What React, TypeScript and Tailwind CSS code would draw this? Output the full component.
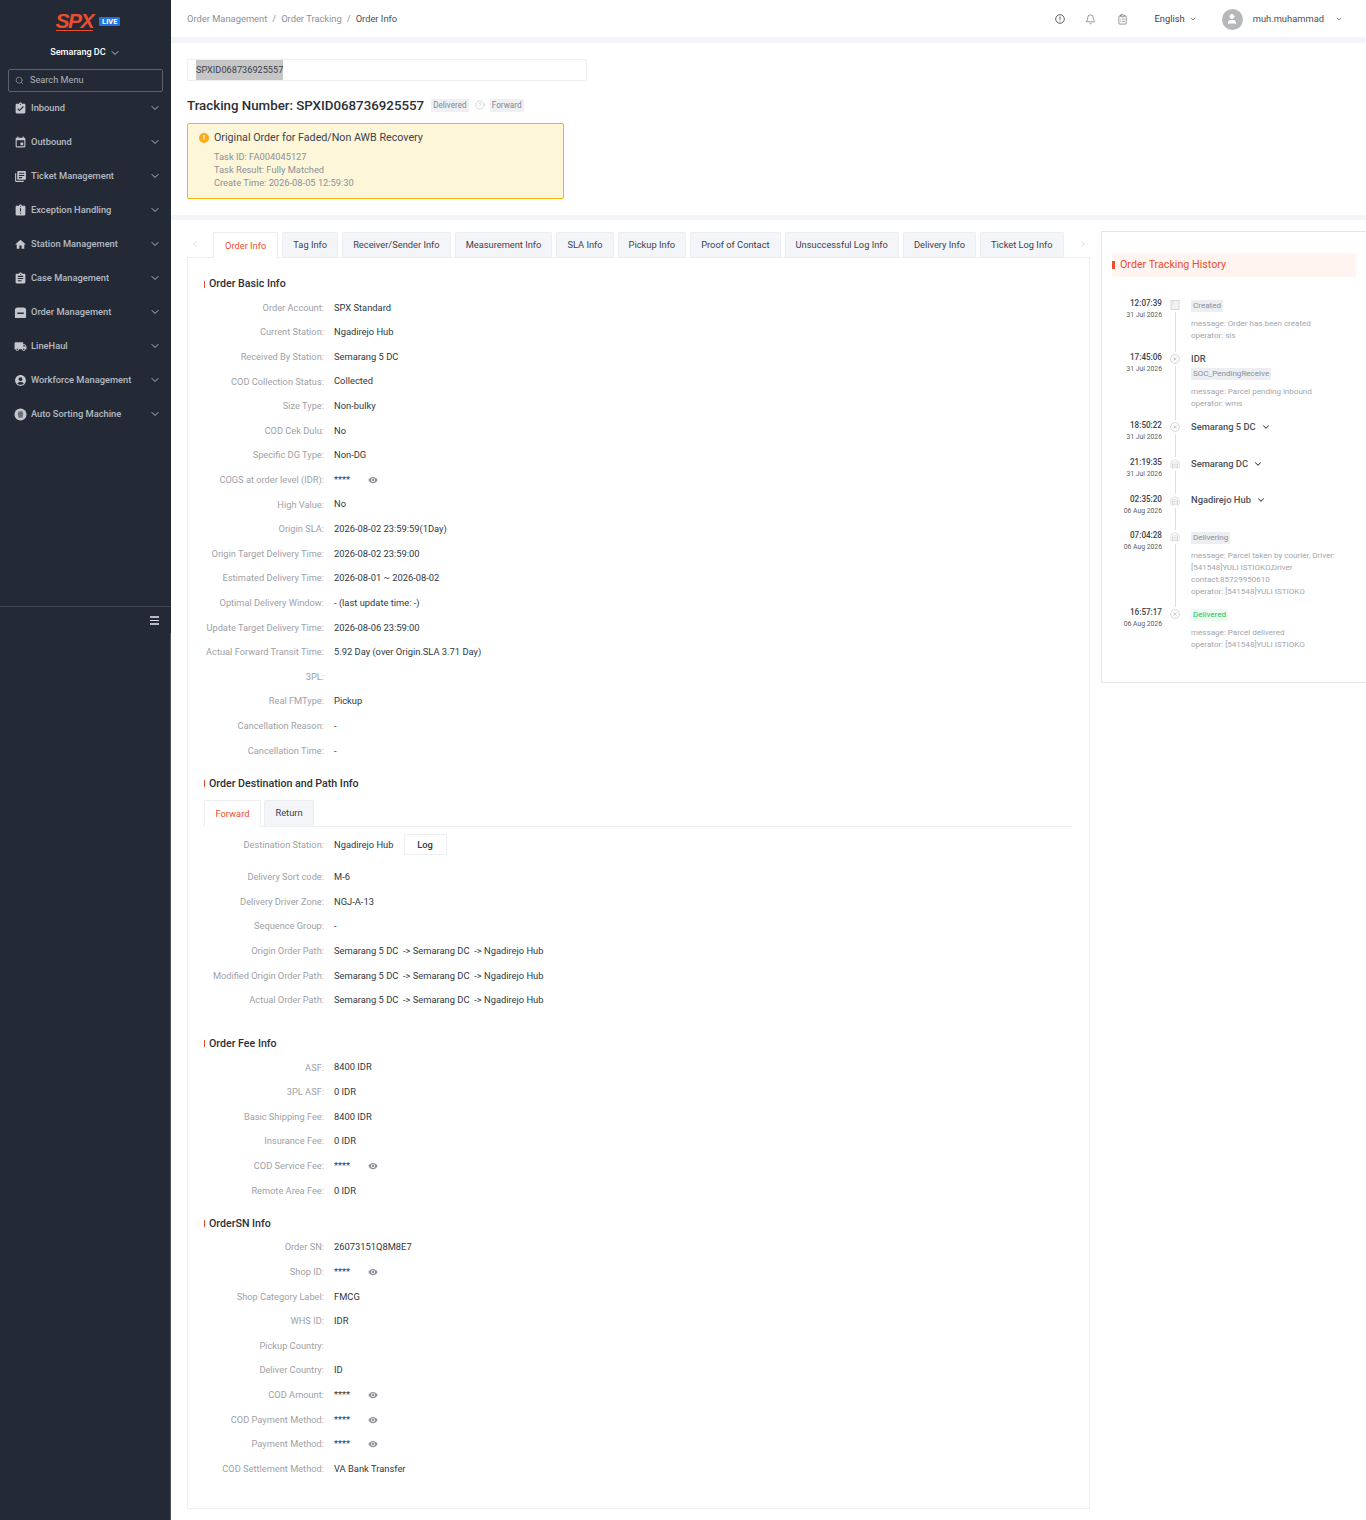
import { Bell, ChevronDown, ChevronLeft, ChevronRight, CircleHelp, ClipboardList, Search, User, Warehouse } from 'lucide-react'
import { ReactNode } from 'react'
import {
  MdAccountCircle,
  MdAssignment,
  MdAssignmentLate,
  MdAssignmentTurnedIn,
  MdEvent,
  MdHome,
  MdLibraryBooks,
  MdLocalShipping,
  MdVisibility,
} from 'react-icons/md'

const iconClass = 'w-[13px] h-[13px]'

const OrderIcon = () => (
  <svg viewBox="0 0 14 14" className={iconClass} fill="currentColor">
    <path d="M4 1.5h6A3 3 0 0 1 13 4.5V12a1 1 0 0 1-1 1H2a1 1 0 0 1-1-1V4.5a3 3 0 0 1 3-3z" />
    <rect x="3.5" y="7" width="7" height="1.6" fill="#232a35" />
  </svg>
)

const SortingIcon = () => (
  <svg viewBox="0 0 14 14" className={iconClass} fill="currentColor">
    <circle cx="7" cy="7" r="6.5" />
    <path d="M5 3.5h4l1 3-1 4H5l-1-4z" fill="#232a35" opacity="0.55" />
  </svg>
)

const menuItems: { label: string; icon: ReactNode }[] = [
  { label: 'Inbound', icon: <MdAssignmentTurnedIn className={iconClass} /> },
  { label: 'Outbound', icon: <MdEvent className={iconClass} /> },
  { label: 'Ticket Management', icon: <MdLibraryBooks className={iconClass} /> },
  { label: 'Exception Handling', icon: <MdAssignmentLate className={iconClass} /> },
  { label: 'Station Management', icon: <MdHome className={iconClass} /> },
  { label: 'Case Management', icon: <MdAssignment className={iconClass} /> },
  { label: 'Order Management', icon: <OrderIcon /> },
  { label: 'LineHaul', icon: <MdLocalShipping className={iconClass} /> },
  { label: 'Workforce Management', icon: <MdAccountCircle className={iconClass} /> },
  { label: 'Auto Sorting Machine', icon: <SortingIcon /> },
]

const tabs = [
  'Order Info',
  'Tag Info',
  'Receiver/Sender Info',
  'Measurement Info',
  'SLA Info',
  'Pickup Info',
  'Proof of Contact',
  'Unsuccessful Log Info',
  'Delivery Info',
  'Ticket Log Info',
]

type RowData = [string, string]

const MASK = '****'

const basicRows: RowData[] = [
  ['Order Account', 'SPX Standard'],
  ['Current Station', 'Ngadirejo Hub'],
  ['Received By Station', 'Semarang 5 DC'],
  ['COD Collection Status', 'Collected'],
  ['Size Type', 'Non-bulky'],
  ['COD Cek Dulu', 'No'],
  ['Specific DG Type', 'Non-DG'],
  ['COGS at order level (IDR)', MASK],
  ['High Value', 'No'],
  ['Origin SLA', '2026-08-02 23:59:59(1Day)'],
  ['Origin Target Delivery Time', '2026-08-02 23:59:00'],
  ['Estimated Delivery Time', '2026-08-01 ~ 2026-08-02'],
  ['Optimal Delivery Window', '- (last update time: -)'],
  ['Update Target Delivery Time', '2026-08-06 23:59:00'],
  ['Actual Forward Transit Time', '5.92 Day (over Origin.SLA 3.71 Day)'],
  ['3PL', ''],
  ['Real FMType', 'Pickup'],
  ['Cancellation Reason', '-'],
  ['Cancellation Time', '-'],
]

const PATH = 'Semarang 5 DC  -> Semarang DC  -> Ngadirejo Hub'

const pathRows: RowData[] = [
  ['Delivery Sort code', 'M-6'],
  ['Delivery Driver Zone', 'NGJ-A-13'],
  ['Sequence Group', '-'],
  ['Origin Order Path', PATH],
  ['Modified Origin Order Path', PATH],
  ['Actual Order Path', PATH],
]

const feeRows: RowData[] = [
  ['ASF', '8400 IDR'],
  ['3PL ASF', '0 IDR'],
  ['Basic Shipping Fee', '8400 IDR'],
  ['Insurance Fee', '0 IDR'],
  ['COD Service Fee', MASK],
  ['Remote Area Fee', '0 IDR'],
]

const snRows: RowData[] = [
  ['Order SN', '26073151Q8M8E7'],
  ['Shop ID', MASK],
  ['Shop Category Label', 'FMCG'],
  ['WHS ID', 'IDR'],
  ['Pickup Country', ''],
  ['Deliver Country', 'ID'],
  ['COD Amount', MASK],
  ['COD Payment Method', MASK],
  ['Payment Method', MASK],
  ['COD Settlement Method', 'VA Bank Transfer'],
]

function SectionTitle({ title, className }: { title: string; className?: string }) {
  return (
    <div className={`flex items-center h-6 ${className ?? ''}`}>
      <span className="w-px h-[7px] bg-[#ee4d2d] mr-1" />
      <span className="text-[10.65px] font-medium text-[#2b2f36]">{title}</span>
    </div>
  )
}

function Rows({ rows }: { rows: RowData[] }) {
  return (
    <div className="-mt-[0.7px]">
      {rows.map(([label, value]) => (
        <div key={label} className="flex items-center h-[24.62px] whitespace-nowrap">
          <span className="w-[120px] shrink-0 text-right text-[9.25px] text-[#9ea1a8]">{label}:</span>
          <span className="ml-[10px] text-[9.35px] text-[#303844] whitespace-pre">{value}</span>
          {value === MASK && <MdVisibility className="ml-[18px] w-[10px] h-[10px] text-[#8b9099]" />}
        </div>
      ))}
    </div>
  )
}

type HistoryItem = {
  time: string
  date: string
  icon: 'doc' | 'x' | 'house'
  height: string
  station?: string
  chevron?: boolean
  tag?: string
  tagGreen?: boolean
  lines?: string[]
}

const history: HistoryItem[] = [
  {
    time: '12:07:39',
    date: '31 Jul 2026',
    icon: 'doc',
    height: 'h-[54px]',
    tag: 'Created',
    lines: ['message: Order has been created', 'operator: sls'],
  },
  {
    time: '17:45:06',
    date: '31 Jul 2026',
    icon: 'x',
    height: 'h-[68px]',
    station: 'IDR',
    tag: 'SOC_PendingReceive',
    lines: ['message: Parcel pending inbound', 'operator: wms'],
  },
  { time: '18:50:22', date: '31 Jul 2026', icon: 'x', height: 'h-[37px]', station: 'Semarang 5 DC', chevron: true },
  { time: '21:19:35', date: '31 Jul 2026', icon: 'house', height: 'h-[36.5px]', station: 'Semarang DC', chevron: true },
  { time: '02:35:20', date: '06 Aug 2026', icon: 'house', height: 'h-[36.5px]', station: 'Ngadirejo Hub', chevron: true },
  {
    time: '07:04:28',
    date: '06 Aug 2026',
    icon: 'house',
    height: 'h-[77px]',
    tag: 'Delivering',
    lines: [
      'message: Parcel taken by courier, Driver:',
      '[541548]YULI ISTIOKO,Driver',
      'contact:85729950610',
      'operator: [541548]YULI ISTIOKO',
    ],
  },
  {
    time: '16:57:17',
    date: '06 Aug 2026',
    icon: 'x',
    height: 'h-[50px]',
    tag: 'Delivered',
    tagGreen: true,
    lines: ['message: Parcel delivered', 'operator: [541548]YULI ISTIOKO'],
  },
]

function TimelineIcon({ type }: { type: HistoryItem['icon'] }) {
  if (type === 'doc') {
    return (
      <svg viewBox="0 0 10 10" className="w-[10px] h-[10px] text-[#d5d7db]" fill="none" stroke="currentColor">
        <rect x="1" y="0.5" width="8" height="9" fill="#f1f2f4" />
        <path d="M3 1v4" stroke="#dfe1e5" />
      </svg>
    )
  }
  if (type === 'house') {
    return <Warehouse className="w-[10px] h-[10px] text-[#c9ccd1]" strokeWidth={1.5} />
  }
  return (
    <svg viewBox="0 0 10 10" className="w-[10px] h-[10px] text-[#c9ccd1]" fill="none" stroke="currentColor">
      <circle cx="5" cy="5" r="4.4" strokeWidth="0.8" />
      <path d="M3.4 3.4l3.2 3.2M6.6 3.4L3.4 6.6" strokeWidth="1" />
    </svg>
  )
}

function Sidebar() {
  return (
    <aside className="w-[171px] shrink-0 bg-[#232a35] flex flex-col min-h-[1520px]">
      <div className="flex items-center justify-center h-[41px] pl-[5px]">
        <div className="flex flex-col items-start">
          <span className="text-[#ee4d2d] text-[21px] leading-[19px] font-bold italic tracking-[-1.5px] font-['Liberation_Sans',sans-serif]">
            SPX
          </span>
          <span className="w-[37px] h-px bg-[#ee4d2d]" />
        </div>
        <span className="ml-[6px] mt-[1px] bg-[#2673dd] text-white text-[7.5px] font-bold leading-[9px] px-[3px] rounded-[1px]">
          LIVE
        </span>
      </div>
      <div className="flex items-center justify-center h-[20px] mt-[2px] text-white text-[9.1px] font-medium">
        Semarang DC
        <ChevronDown className="ml-[3px] w-[12px] h-[12px] text-[#c4c7cc]" />
      </div>
      <div className="mx-2 mt-[6px] h-[23px] border border-[#5b626c] rounded-[2px] flex items-center pl-[6px] text-[#aeb4bd] text-[9.2px]">
        <Search className="w-[9px] h-[9px] mr-[6px] text-[#8b9099]" />
        <span className="-translate-y-px">Search Menu</span>
      </div>
      <nav>
        {menuItems.map((item) => (
          <div key={item.label} className="flex items-center h-[34px] pl-[14px] pr-[10px] text-[#b5bbc4] text-[9.3px] font-medium">
            <span className="w-[17px] text-[#c3c7cd] -translate-y-px">{item.icon}</span>
            <span className="flex-1 -translate-y-px">{item.label}</span>
            <ChevronDown className="w-[12px] h-[12px] text-[#b5bbc4] -translate-y-px" />
          </div>
        ))}
      </nav>
      <div className="mt-[174px] h-[27px] border-t border-[#3f4650] flex items-center justify-end pr-3">
        <div className="flex flex-col gap-[2px] w-[9px]">
          <span className="h-[2px] bg-[#b5bbc4]" />
          <span className="h-px bg-[#d8dbe0]" />
          <span className="h-[2px] bg-[#b5bbc4]" />
        </div>
      </div>
      <div className="flex-1 border-r border-[#4b515b]" />
    </aside>
  )
}

function Header() {
  return (
    <header className="h-[37px] bg-white flex items-center pl-4 pr-[23px] pt-px text-[9.35px]">
      <span className="text-[#8b9099]">Order Management</span>
      <span className="mx-[5px] text-[#8b9099]">/</span>
      <span className="text-[#8b9099]">Order Tracking</span>
      <span className="mx-[5px] text-[#8b9099]">/</span>
      <span className="text-[#4a5058]">Order Info</span>
      <div className="ml-auto flex items-center text-[#4a5058]">
        <svg viewBox="0 0 10 10" className="w-[10px] h-[10px]" fill="none" stroke="currentColor" strokeWidth="0.9">
          <circle cx="5" cy="5" r="4.3" />
          <path d="M5 2.5v3.4M5 6.8v.8" />
        </svg>
        <Bell className="ml-[20px] w-[11px] h-[11px]" strokeWidth={1.25} />
        <ClipboardList className="ml-[21px] w-[11px] h-[11px]" strokeWidth={1.25} />
        <span className="ml-[26px] text-[#3c424b]">English</span>
        <ChevronDown className="ml-1 w-[8px] h-[8px]" />
        <span className="ml-[25px] w-[21px] h-[21px] rounded-full bg-[#b5b7ba] flex items-center justify-center">
          <User className="w-[12px] h-[12px] text-white" fill="white" />
        </span>
        <span className="ml-[10px] text-[#4a5058]">muh.muhammad</span>
        <ChevronDown className="ml-[11px] w-[8px] h-[8px]" />
      </div>
    </header>
  )
}

function TrackingSummary() {
  return (
    <section className="bg-white h-[172px] pl-4 pt-[16px]">
      <div className="w-[400px] h-[22px] border border-[#eceef2] rounded-[2px] pl-2 flex items-stretch text-[9.2px] text-[#3c424b]">
        <span className="bg-[#c6c6c6] flex items-center">SPXID068736925557</span>
      </div>
      <div className="flex items-center mt-[14px] h-[22px]">
        <span className="text-[13.3px] font-medium text-[#2b2f36]">Tracking Number: SPXID068736925557</span>
        <span className="ml-[7px] -translate-y-px bg-[#eef0f3] text-[#848992] text-[8.2px] h-[13px] leading-[13px] px-[2px]">Delivered</span>
        <CircleHelp className="ml-[6px] -translate-y-px w-[10px] h-[10px] text-[#b5b7ba]" strokeWidth={1.25} />
        <span className="ml-[5px] -translate-y-px bg-[#eef0f3] text-[#848992] text-[8.2px] h-[13px] leading-[13px] px-[2px]">Forward</span>
      </div>
      <div className="mt-[6px] w-[377px] h-[76px] bg-[#fef6d9] border border-[#fbb018] rounded-[2px] pl-[11px] pt-[7px] flex">
        <span className="mt-[2px] w-[10px] h-[10px] rounded-full bg-[#fba81c] text-white text-[8px] font-bold leading-[10px] text-center">!</span>
        <div className="ml-[5px]">
          <div className="text-[10.7px] leading-[14px] text-[#3c424b]">Original Order for Faded/Non AWB Recovery</div>
          <div className="mt-[5px] text-[9.3px] leading-[13px] text-[#8b9099]">
            <div>Task ID: FA004045127</div>
            <div>Task Result: Fully Matched</div>
            <div>Create Time: 2026-08-05 12:59:30</div>
          </div>
        </div>
      </div>
    </section>
  )
}

function DetailTabs() {
  return (
    <div className="flex items-end h-[26px]">
      <div className="w-[26px] shrink-0 h-full flex items-center">
        <ChevronLeft className="ml-[3px] w-[10px] h-[10px] text-[#d5d7db]" />
      </div>
      <div className="flex gap-[4px] whitespace-nowrap">
        {tabs.map((tab, i) => (
          <div
            key={tab}
            className={
              i === 0
                ? 'h-[26px] px-[11px] -mb-px z-10 flex items-center bg-white border border-b-0 border-[#eceef2] rounded-t-[2px] text-[9.3px] text-[#ee4d2d]'
                : 'h-[25px] px-[10px] flex items-center bg-[#f4f5f9] border border-b-0 border-[#eceef2] rounded-t-[2px] text-[9.3px] text-[#3c424b]'
            }
          >
            {tab}
          </div>
        ))}
      </div>
      <div className="ml-[14px] h-full flex items-center">
        <ChevronRight className="w-[10px] h-[10px] text-[#d5d7db]" />
      </div>
    </div>
  )
}

function InfoPanel() {
  return (
    <div className="h-[1252px] border border-[#eceef2] pt-[14px] pl-4 pr-[17px]">
      <SectionTitle title="Order Basic Info" />
      <Rows rows={basicRows} />
      <SectionTitle title="Order Destination and Path Info" className="mt-[9px]" />
      <div className="mt-[4px] flex gap-[3px] border-b border-[#eceef2] h-[27px]">
        <div className="w-[57px] h-[27px] bg-white border border-b-0 border-[#eceef2] rounded-t-[2px] flex items-center justify-center text-[9.35px] text-[#ee4d2d]">
          Forward
        </div>
        <div className="w-[50px] h-[26px] bg-[#f4f5f9] border border-b-0 border-[#eceef2] rounded-t-[2px] flex items-center justify-center text-[9.35px] text-[#3c424b]">
          Return
        </div>
      </div>
      <div className="mt-[7px] flex items-center h-[22px]">
        <span className="w-[120px] text-right text-[9.25px] text-[#9ea1a8]">Destination Station:</span>
        <span className="ml-[10px] text-[9.35px] text-[#303844]">Ngadirejo Hub</span>
        <span className="ml-[10px] w-[43px] h-[21px] border border-[#eceef2] rounded-[2px] flex items-center justify-center text-[9.35px] font-medium text-[#303844]">
          Log
        </span>
      </div>
      <div className="mt-[9.6px]">
        <Rows rows={pathRows} />
      </div>
      <SectionTitle title="Order Fee Info" className="mt-[19.4px]" />
      <Rows rows={feeRows} />
      <SectionTitle title="OrderSN Info" className="mt-[8.9px]" />
      <Rows rows={snRows} />
    </div>
  )
}

function TrackingHistory() {
  return (
    <div className="w-[265px] h-[452px] border border-r-0 border-[#e3e4e6] pl-[10px] pt-[21px]">
      <div className="w-[244px] h-[24px] bg-[#fff4f0] rounded-[2px] flex items-center">
        <span className="w-[3px] h-[8px] bg-[#ee4d2d]" />
        <span className="ml-[5px] text-[10.7px] text-[#ee4d2d]">Order Tracking History</span>
      </div>
      <div className="mt-[23px]">
        {history.map((item, i) => (
          <div key={item.time} className={`flex ${item.height}`}>
            <div className="w-[50px] text-right -mt-[2px]">
              <div className="text-[8.15px] leading-[11px] font-medium text-[#3c424b]">{item.time}</div>
              <div className="text-[6.8px] leading-[12px] text-[#5a6068]">{item.date}</div>
            </div>
            <div className="w-[26px] flex flex-col items-center">
              <TimelineIcon type={item.icon} />
              {i < history.length - 1 && <span className="w-px flex-1 my-[2px] bg-[#dcdee1]" />}
            </div>
            <div className="ml-[3px] -mt-[1.5px]">
              {item.station && (
                <div className="flex items-center h-[12px] text-[9.35px] font-medium text-[#4a5058]">
                  {item.station}
                  {item.chevron && <ChevronDown className="ml-[5px] w-[10px] h-[10px] text-[#3c424b]" strokeWidth={2.5} />}
                </div>
              )}
              {item.tag && (
                <div
                  className={
                    item.tagGreen
                      ? 'block w-fit mt-px px-[2px] h-[12px] leading-[12px] text-[8.05px] bg-[#ecfbf1] text-[#1ec15f]'
                      : `block w-fit ${item.station ? 'mt-[3px]' : 'mt-px'} px-[2px] h-[12px] leading-[12px] text-[8.05px] bg-[#eceef2] text-[#8b9099]`
                  }
                >
                  {item.tag}
                </div>
              )}
              {item.lines && (
                <div className="mt-[6px] text-[8.05px] leading-[12px] text-[#a3a6ad] whitespace-nowrap">
                  {item.lines.map((line) => (
                    <div key={line}>{line}</div>
                  ))}
                </div>
              )}
            </div>
          </div>
        ))}
      </div>
    </div>
  )
}

export default function App() {
  return (
    <div className="flex w-[1366px] min-h-[1520px] overflow-hidden bg-white font-['Roboto',sans-serif]">
      <Sidebar />
      <main className="flex-1 min-w-0">
        <Header />
        <div className="h-[6px] bg-[#f4f5f9]" />
        <TrackingSummary />
        <div className="h-[5px] bg-[#f4f5f9]" />
        <div className="flex items-start pl-4 pt-[11px]">
          <div className="w-[903px] shrink-0">
            <DetailTabs />
            <InfoPanel />
          </div>
          <div className="ml-[11px]">
            <TrackingHistory />
          </div>
        </div>
      </main>
    </div>
  )
}
